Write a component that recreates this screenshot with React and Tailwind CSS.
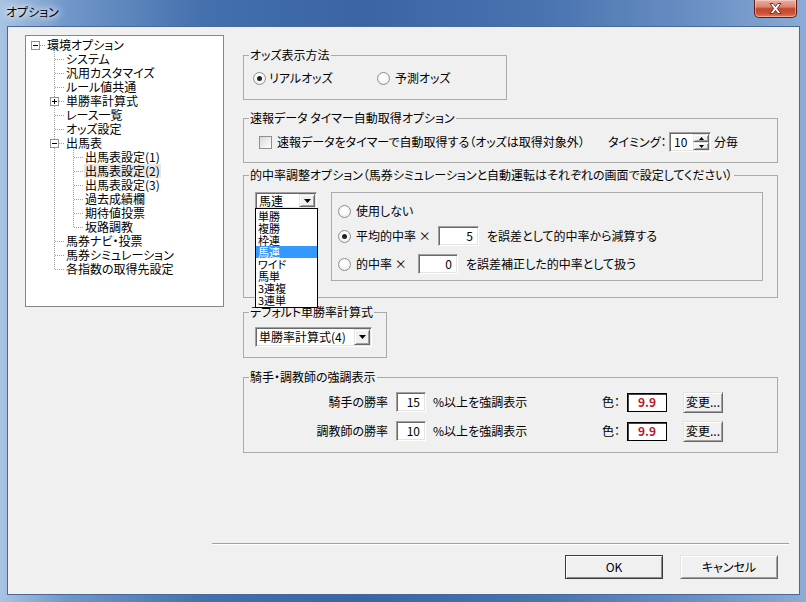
import React from 'react'

const FONT = "font-['Noto_Sans_CJK_JP','Noto_Sans_CJK_SC',sans-serif]"
const SUNKEN =
  'border border-t-[#a0a0a0] border-l-[#a0a0a0] border-r-white border-b-white shadow-[inset_1px_1px_0_#696969,inset_-1px_-1px_0_#e3e3e3] bg-white'
const RAISED =
  'border border-t-[#e3e3e3] border-l-[#e3e3e3] border-r-[#696969] border-b-[#696969] shadow-[inset_1px_1px_0_#fff,inset_-1px_-1px_0_#a0a0a0] bg-[#f0f0f0]'

const tree = [
  ['環境オプション', 0],
  ['システム', 1],
  ['汎用カスタマイズ', 1],
  ['ルール値共通', 1],
  ['単勝率計算式', 1],
  ['レース一覧', 1],
  ['オッズ設定', 1],
  ['出馬表', 1],
  ['出馬表設定(1)', 2],
  ['出馬表設定(2)', 2],
  ['出馬表設定(3)', 2],
  ['過去成績欄', 2],
  ['期待値投票', 2],
  ['坂路調教', 2],
  ['馬券ナビ・投票', 1],
  ['馬券シミュレーション', 1],
  ['各指数の取得先設定', 1],
]
const indent = ['pl-[20px]', 'pl-[39px]', 'pl-[58px]']
const bets = ['単勝', '複勝', '枠連', '馬連', 'ワイド', '馬単', '3連複', '3連単']

// row centre (pixel) inside the tree panel
const cy = i => 9 + 14 * i

function Box({ x, y, plus }) {
  return (
    <g>
      <rect x={x - 3.5} y={y - 3.5} width="8" height="8" fill="#fff" stroke="#919191" />
      <path d={`M${x - 2} ${y + 0.5}h5`} stroke="#000" />
      {plus && <path d={`M${x + 0.5} ${y - 2}v5`} stroke="#000" />}
    </g>
  )
}

function TreeLines() {
  const dot = { stroke: '#a0a0a0', strokeDasharray: '1 1' }
  const l1 = [1, 2, 3, 5, 6, 14, 15, 16]
  const l2 = [8, 9, 10, 11, 12, 13]
  return (
    <svg className="absolute left-0 top-0" width="197" height="270">
      <path d={`M14 ${cy(0) + 0.5}h6`} {...dot} />
      <path d={`M28.5 16V${cy(16) + 1}`} {...dot} />
      {l1.map(i => (
        <path key={i} d={`M29 ${cy(i) + 0.5}h9`} {...dot} />
      ))}
      <path d={`M33 ${cy(4) + 0.5}h5M33 ${cy(7) + 0.5}h5`} {...dot} />
      <path d={`M47.5 ${cy(7) + 5}V${cy(13) + 1}`} {...dot} />
      {l2.map(i => (
        <path key={i} d={`M48 ${cy(i) + 0.5}h9`} {...dot} />
      ))}
      <Box x={9} y={cy(0)} />
      <Box x={28} y={cy(4)} plus />
      <Box x={28} y={cy(7)} />
    </svg>
  )
}

function Arrow() {
  return (
    <svg width="7" height="4" viewBox="0 0 7 4">
      <path d="M0 0h7L3.5 4z" fill="#000" />
    </svg>
  )
}

function Radio({ checked }) {
  return (
    <span className="flex h-[13px] w-[13px] shrink-0 items-center justify-center rounded-full border border-[#8e8f8f] bg-[radial-gradient(circle_at_50%_40%,#ffffff_30%,#e2e2e2)]">
      {checked && <span className="h-[5px] w-[5px] rounded-full bg-[#222]" />}
    </span>
  )
}

function Check() {
  return <span className="h-[13px] w-[13px] shrink-0 border border-[#8e8f8f] bg-[linear-gradient(135deg,#d8d8d8,#ffffff)]" />
}

function Field({ className, value }) {
  return (
    <div className={SUNKEN + ' flex h-[20px] items-center justify-end pr-[5px] leading-[14px] ' + className}>{value}</div>
  )
}

function Combo({ className, text }) {
  return (
    <div className={SUNKEN + ' flex items-stretch ' + className}>
      <span className="flex flex-1 items-center pl-[3px] leading-[14px]">{text}</span>
      <span className={RAISED + ' m-[1px] flex w-[16px] items-center justify-center'}>
        <Arrow />
      </span>
    </div>
  )
}

function Spinner() {
  return (
    <div className={SUNKEN + ' flex h-[20px] w-[42px] items-center justify-between pl-[4px] pr-[1px]'}>
      <span className="leading-[14px]">10</span>
      <div className="flex h-[16px] w-[16px] flex-col">
        <span className={RAISED + ' flex flex-1 items-center justify-center'}>
          <svg width="5" height="3" viewBox="0 0 5 3"><path d="M2.5 0L5 3H0z" fill="#000" /></svg>
        </span>
        <span className={RAISED + ' flex flex-1 items-center justify-center'}>
          <svg width="5" height="3" viewBox="0 0 5 3"><path d="M0 0h5L2.5 3z" fill="#000" /></svg>
        </span>
      </div>
    </div>
  )
}

function Group({ title, className, children }) {
  return (
    <fieldset className={'border border-[#aaaaaa] ' + className}>
      <legend className="ml-[5px] px-[1px] leading-[14px]">{title}</legend>
      {children}
    </fieldset>
  )
}

function ColorRow({ label, value }) {
  return (
    <div className="flex h-[20px] items-center">
      <span className="w-[144px] text-right leading-[14px]">{label}</span>
      <Field className="ml-[8px] w-[30px]" value={value} />
      <span className="ml-[7px] w-[169px] leading-[14px]">%以上を強調表示</span>
      <span className="w-[25px] leading-[14px]">色：</span>
      <div className="flex h-[19px] w-[40px] items-center justify-center border border-black bg-white font-bold leading-[14px] text-[#b8182a] shadow-[inset_1px_1px_0_#444]">
        9.9
      </div>
      <button className={RAISED + ' ml-[16px] h-[21px] w-[40px] leading-[14px]'}>変更...</button>
    </div>
  )
}

export default function App() {
  return (
    <div
      className={`${FONT} [font-feature-settings:'palt'] flex h-[602px] w-[806px] flex-col overflow-hidden bg-[linear-gradient(90deg,#a9c3e3_0%,#7198ca_8%,#4470ad_25%,#3a64a3_45%,#4a74b0_68%,#6c92c6_88%,#8cabd6_100%)] text-[12px] text-black`}
    >
      {/* title bar */}
      <div className="flex h-[26px] shrink-0 items-start justify-between">
        <span className="pl-[6px] pt-[5px] leading-[14px] [text-shadow:0_0_5px_#fff,0_0_9px_#fff,0_0_14px_#e6eef8]">
          オプション
        </span>
        <div className="mr-[9px] flex h-[18px] w-[43px] items-center justify-center rounded-b-[5px] border border-t-0 border-[#5c1f16] bg-[linear-gradient(180deg,#eab0a2_0%,#dc8470_40%,#c5432c_52%,#cf5338_80%,#e0805f_100%)] shadow-[inset_0_0_0_1px_rgba(255,230,220,0.45)]">
          <svg width="13" height="11" viewBox="0 0 13 11">
            <path
              d="M1 0.5h3.2L6.5 3.6 8.8 0.5H12L8.3 5.5 12 10.5H8.8L6.5 7.4 4.2 10.5H1L4.7 5.5z"
              fill="#fff"
              stroke="#4a1a12"
              strokeWidth="0.8"
            />
          </svg>
        </div>
      </div>

      <div className="flex flex-1">
        <div className="w-[7px]" />
        <div className="flex w-[793px] flex-col border border-[#4a6894] bg-[#f0f0f0]">
          <div className="flex items-start pl-[17px] pt-[8px]">
            {/* tree */}
            <div className="relative h-[272px] w-[199px] border border-[#828790] bg-white">
              <TreeLines />
              <div className="relative pt-[2px]">
                {tree.map(([t, l], i) => (
                  <div key={i} className={'flex h-[14px] items-center ' + indent[l]}>
                    <span className={'px-[1px] leading-[14px] ' + (i === 9 ? 'bg-[#e8e8e8]' : '')}>{t}</span>
                  </div>
                ))}
              </div>
            </div>

            {/* options */}
            <div className="ml-[19px] flex flex-col items-start">
              <Group title="オッズ表示方法" className="mt-[13px] h-[52px] w-[264px]">
                <div className="box-content flex h-[16px] items-center pl-[9px] pt-[8px]">
                  <label className="flex w-[124px] items-center gap-[3px] leading-[14px]">
                    <Radio checked />
                    リアルオッズ
                  </label>
                  <label className="flex items-center gap-[5px] leading-[14px]">
                    <Radio />
                    予測オッズ
                  </label>
                </div>
              </Group>

              <Group title="速報データ タイマー自動取得オプション" className="mt-[11px] h-[52px] w-[535px]">
                <div className="flex items-center pl-[15px] pt-[7px]">
                  <div className="flex w-[349px] items-center gap-[5px] leading-[14px]">
                    <Check />
                    速報データをタイマーで自動取得する（オッズは取得対象外）
                  </div>
                  <span className="w-[61px] leading-[14px]">タイミング：</span>
                  <Spinner />
                  <span className="ml-[3px] leading-[14px]">分毎</span>
                </div>
              </Group>

              <Group
                title="的中率調整オプション（馬券シミュレーションと自動運転はそれぞれの画面で設定してください）"
                className="mt-[5px] h-[130px] w-[535px]"
              >
                <div className="flex items-start pl-[11px] pt-[10px]">
                  <div className="relative">
                    <Combo className="h-[17px] w-[62px]" text="馬連" />
                    <ul className="absolute left-0 top-[16px] z-10 w-[63px] border border-black bg-white py-[1px] text-[11px]">
                      {bets.map(b => (
                        <li
                          key={b}
                          className={'h-[12px] pl-[2px] leading-[12px] ' + (b === '馬連' ? 'bg-[#3399ff] text-white' : '')}
                        >
                          {b}
                        </li>
                      ))}
                    </ul>
                  </div>
                  <div className="ml-[14px] h-[89px] w-[432px] border border-[#aaaaaa] pl-[6px] pt-[10px]">
                    <div className="flex h-[16px] items-center gap-[5px] leading-[14px]">
                      <Radio />
                      使用しない
                    </div>
                    <div className="mt-[7px] flex h-[20px] items-center leading-[14px]">
                      <Radio checked />
                      <span className="ml-[5px] w-[82px]">平均的中率 ×</span>
                      <Field className="w-[41px]" value="5" />
                      <span className="ml-[8px]">を誤差として的中率から減算する</span>
                    </div>
                    <div className="mt-[8px] flex h-[20px] items-center leading-[14px]">
                      <Radio />
                      <span className="ml-[5px] w-[62px]">的中率 ×</span>
                      <Field className="w-[40px]" value="0" />
                      <span className="ml-[8px]">を誤差補正した的中率として扱う</span>
                    </div>
                  </div>
                </div>
              </Group>

              <Group title="デフォルト単勝率計算式" className="mt-[7px] h-[53px] w-[144px]">
                <div className="pl-[11px] pt-[8px]">
                  <Combo className="h-[20px] w-[117px]" text="単勝率計算式(4)" />
                </div>
              </Group>

              <Group title="騎手・調教師の強調表示" className="mt-[12px] h-[83px] w-[535px]">
                <div className="flex flex-col gap-[9px] pt-[8px]">
                  <ColorRow label="騎手の勝率" value="15" />
                  <ColorRow label="調教師の勝率" value="10" />
                </div>
              </Group>
            </div>
          </div>

          {/* footer */}
          <div className="mt-auto">
            <div className="ml-[204px] mr-[10px] h-[2px] border-t border-b border-t-[#a0a0a0] border-b-white" />
            <div className="mb-[15px] mr-[21px] mt-[10px] flex justify-end gap-[17px]">
              <button className="h-[24px] w-[98px] border border-[#3c3c3c] bg-[#f0f0f0] leading-[14px] shadow-[inset_1px_1px_0_#fff,inset_-1px_-1px_0_#8a8a8a]">
                OK
              </button>
              <button className={RAISED + ' h-[24px] w-[98px] leading-[14px]'}>キャンセル</button>
            </div>
          </div>
        </div>
      </div>
      <div className="h-[7px] shrink-0" />
    </div>
  )
}
